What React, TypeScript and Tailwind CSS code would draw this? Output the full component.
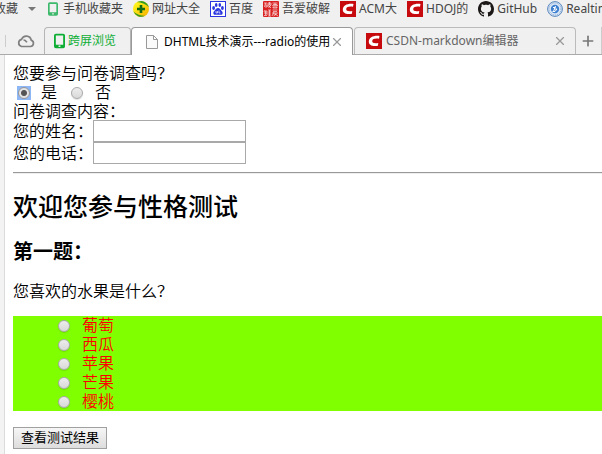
import React, { useState } from "react";
import { Plus, X } from "lucide-react";

const fruits = ["葡萄", "西瓜", "苹果", "芒果", "樱桃"];

const radioClass =
  "size-3 shrink-0 appearance-none rounded-full border border-[#a9a9a9] bg-linear-to-b from-[#ededed] to-[#d9d9d9] shadow-[0_1px_1px_rgba(0,0,0,0.12)]";

const PhoneIcon = ({ className }: { className?: string }) => (
  <svg viewBox="0 0 12 16" className={className} fill="currentColor">
    <path
      fillRule="evenodd"
      d="M2 0h8a2 2 0 0 1 2 2v12a2 2 0 0 1-2 2H2a2 2 0 0 1-2-2V2a2 2 0 0 1 2-2ZM2 2v10h8V2H2Zm3 11v1.500h2V13H5Z"
    />
  </svg>
);

const SiteIcon = () => (
  <svg viewBox="0 0 16 16" className="size-4">
    <defs>
      <linearGradient id="site" x1="0" y1="0" x2="1" y2="1">
        <stop offset="0.2" stopColor="#fff21a" />
        <stop offset="0.9" stopColor="#f5b400" />
      </linearGradient>
    </defs>
    <circle cx="8" cy="8" r="8" fill="url(#site)" />
    <path d="M4 1.2A8 8 0 0 1 15.8 6.2C13 2.6 8 1.4 4 1.2Z" fill="#2f9a24" />
    <path d="M.4 10C3 13.6 8 14.8 12 14.8A8 8 0 0 1 .4 10Z" fill="#2f9a24" />
    <path d="M6.7 4h2.6v2.7H12v2.6H9.3V12H6.7V9.3H4V6.7h2.7Z" fill="#126b12" />
  </svg>
);

const PawIcon = () => (
  <svg viewBox="0 0 16 16" className="size-4">
    <rect x=".5" y=".5" width="15" height="15" fill="#fff" stroke="#2b36e0" />
    <g fill="#2b36e0">
      <ellipse cx="3.6" cy="7" rx="1.4" ry="1.9" />
      <ellipse cx="6.2" cy="4" rx="1.3" ry="1.9" />
      <ellipse cx="9.8" cy="4" rx="1.3" ry="1.9" />
      <ellipse cx="12.4" cy="7" rx="1.4" ry="1.9" />
      <path d="M8 7c1.6 0 2.2 1.4 3.2 2.4 1.2 1.1 1.7 1.8 1.4 3-.3 1.3-1.5 1.6-2.6 1.4-1.3-.2-2.7-.2-4 0-1.1.2-2.3-.1-2.6-1.4-.3-1.2.2-1.9 1.4-3C5.800 8.400 6.400 7 8 7Z" />
    </g>
    <path d="M6 10v2h1.500v-2M9 9.500V12h1.500" fill="none" stroke="#fff" strokeWidth=".7" />
  </svg>
);

const SealIcon = () => (
  <svg viewBox="0 0 16 16" className="size-4">
    <rect width="16" height="16" rx="1" fill="#d92121" />
    <g stroke="#fff" strokeOpacity=".75" strokeWidth=".8" fill="none">
      <path d="M1 2h3M2.500 2 1.500 6M2 4h2v2H2M5 2h3v2M5 2v4M6.500 1v3M5 4h3L5.500 7M6 5l2 2" />
      <path d="M9.500 2h5M12 2v2.500M10 3.500h4v1M9 4.700h6M10 6h4v1h-4z" />
      <path d="M2 9 1 11M2 10h2v4M1 12h3M2.500 10v4M1 14.500h3M5 9h3M6.500 9v6M5 11h3M5 13h3M5 15h3" />
      <path d="M9.500 9h5M10 10.500h4M9 12h6M11 11l-2 4M10.500 13h3l-3 2M12 13l3 2" />
    </g>
  </svg>
);

const CIcon = () => (
  <svg viewBox="0 0 16 16" className="size-4 shrink-0">
    <rect width="16" height="16" fill="#c60a0e" />
    <path
      d="M13.500 3 13 5.800C9.500 5.200 6.500 5.800 6.200 8c-.2 2 2.300 2.600 6.100 2l-.4 2.800C6.500 13.800 2.600 12 2.800 8.500 3 4.500 7.500 2.300 13.500 3Z"
      fill="#fff"
    />
  </svg>
);

const GithubIcon = () => (
  <svg viewBox="0 0 16 16" className="size-4" fill="#1b1817">
    <path d="M8 0C3.580 0 0 3.580 0 8c0 3.540 2.290 6.530 5.470 7.590.4.070.55-.17.55-.38 0-.19-.01-.82-.01-1.490-2.010.37-2.530-.49-2.690-.94-.09-.23-.48-.94-.82-1.130-.28-.15-.68-.52-.01-.53.63-.01 1.080.58 1.230.82.72 1.210 1.870.87 2.330.66.070-.52.28-.87.51-1.070-1.780-.2-3.640-.89-3.640-3.950 0-.87.31-1.590.82-2.150-.08-.2-.36-1.020.08-2.120 0 0 .67-.21 2.200.82.64-.18 1.320-.27 2-.27s1.360.09 2 .27c1.530-1.040 2.200-.82 2.200-.82.44 1.100.16 1.920.08 2.120.51.56.82 1.270.82 2.150 0 3.070-1.870 3.750-3.650 3.950.29.25.54.73.54 1.480 0 1.070-.01 1.930-.01 2.200 0 .21.15.46.55.38A8.010 8.010 0 0 0 16 8c0-4.420-3.580-8-8-8Z" />
  </svg>
);

const BadgeIcon = () => (
  <svg viewBox="0 0 16 16" className="size-4" fill="none">
    <circle cx="8" cy="8" r="7.400" fill="#dbe8f6" stroke="#5b87bd" strokeWidth="1" />
    <circle cx="8" cy="8" r="6" stroke="#7da3d0" strokeDasharray="1 1" />
    <circle cx="8" cy="8" r="4.200" fill="#3f7fd0" />
    <path d="M6 6.500h2.500M8.500 5l-2 5.500M7 8h3L8 10.500H5.500" stroke="#fff" strokeWidth="1" />
  </svg>
);

const CloudIcon = () => (
  <svg viewBox="0 0 18 14" className="h-3.5 w-[18px] shrink-0" fill="none" stroke="#808080" strokeWidth="1.700">
    <path d="M6.500 6c1.800 0 2.500 1 3.500 2.300M4.500 12.500h9a3.300 3.300 0 0 0 .7-6.400A5 5 0 0 0 4.600 5.300a3.700 3.700 0 0 0-.1 7.200Z" />
  </svg>
);

const PageIcon = () => (
  <svg viewBox="0 0 12 14" className="h-3.5 w-3 shrink-0" fill="#fafafa" stroke="#999">
    <path d="M.5.5h7l4 4v9H.5ZM7.500.5v4h4" />
  </svg>
);

const bookmarks = [
  { label: "网址大全", icon: <SiteIcon /> },
  { label: "百度", icon: <PawIcon /> },
  { label: "吾爱破解", icon: <SealIcon /> },
  { label: "ACM大", icon: <CIcon /> },
  { label: "HDOJ的", icon: <CIcon /> },
  { label: "GitHub", icon: <GithubIcon /> },
  { label: "Realtime", icon: <BadgeIcon /> },
];

const App = () => {
  const [join, setJoin] = useState("yes");

  return (
    <div className="overflow-hidden bg-white">
      <header className="bg-[#f0f0f0] font-['Noto_Sans','Noto_Sans_CJK_SC',sans-serif] text-[12px] leading-4 whitespace-nowrap text-[#444]">
        <nav className="flex h-[27px] items-start gap-2.5 overflow-hidden pt-px">
          <a href="#" className="-ml-1.5 flex shrink-0 items-center gap-2.5">
            收藏
            <span className="border-x-4 border-t-4 border-x-transparent border-t-[#777]" />
          </a>
          <a href="#" className="ml-0.5 flex shrink-0 items-center gap-[5px]">
            <PhoneIcon className="h-3.5 w-2.5 text-[#3cb96b]" />
            手机收藏夹
          </a>
          {bookmarks.map((item) => (
            <a href="#" key={item.label} className="flex shrink-0 items-center gap-[3px]">
              {item.icon}
              {item.label}
            </a>
          ))}
        </nav>
        <div className="flex h-7 border-b border-[#aaa]">
          <div className="flex w-11 shrink-0 items-center gap-[11px] pl-[5px]">
            <span className="h-3 w-px bg-[#ccc]" />
            <CloudIcon />
          </div>
          <button className="flex w-[87px] shrink-0 items-center gap-[3px] rounded-t-[4px] border border-b-0 border-[#b5b5b5] pl-[9px] text-[#0eae35]">
            <PhoneIcon className="h-4 w-[11px]" />
            跨屏浏览
          </button>
          <div className="-mb-px flex w-[222px] shrink-0 items-center gap-1.5 rounded-t-[4px] border border-b-0 border-[#999] bg-white pr-2 pl-3.5 text-black">
            <PageIcon />
            <span className="min-w-0 flex-1 overflow-hidden">DHTML技术演示---radio的使用</span>
            <button aria-label="关闭" className="-ml-1.5 text-[#999]">
              <X size={14} strokeWidth={2} />
            </button>
          </div>
          <div className="ml-px flex w-[222px] shrink-0 items-center gap-1 rounded-t-[4px] border border-b-0 border-[#bbb] pr-2 pl-[11px] text-[#666]">
            <CIcon />
            <span className="flex-1">CSDN-markdown编辑器</span>
            <button aria-label="关闭" className="text-[#999]">
              <X size={14} strokeWidth={2} />
            </button>
          </div>
          <button aria-label="新标签页" className="flex flex-1 items-center border-r border-[#ccc] pl-1 text-[#777]">
            <Plus size={16} strokeWidth={2.5} className="shrink-0" />
          </button>
        </div>
      </header>

      <main className="flex">
        <div className="w-[5px] shrink-0 border-r border-[#dcdcdc] bg-[#f3f3f3]" />
        <div className="min-w-0 flex-1 pt-[9px] pb-[5px] pl-2 font-['Liberation_Serif','Noto_Sans_CJK_SC',sans-serif] text-[16px] leading-[19px] font-[350] text-black">
          <form>
            <p>您要参与问卷调查吗？</p>
            <div className="flex items-center">
              <label className="flex items-center gap-2.5 pl-1">
                <span className="flex bg-[#8db8f5] p-px">
                  <input
                    type="radio"
                    name="join"
                    checked={join === "yes"}
                    onChange={() => setJoin("yes")}
                    className="size-3 shrink-0 appearance-none rounded-full border border-[#999] bg-radial from-[#555] from-35% to-[#e4e4e4] to-50%"
                  />
                </span>
                是
              </label>
              <label className="flex items-center gap-3 pl-3.5">
                <input
                  type="radio"
                  name="join"
                  checked={join === "no"}
                  onChange={() => setJoin("no")}
                  className={radioClass}
                />
                否
              </label>
            </div>
            <p>问卷调查内容：</p>
            <label className="-mt-px flex items-center">
              您的姓名：
              <input type="text" className="h-[22px] w-[153px] border border-[#a9a9a9] bg-white px-1" />
            </label>
            <label className="flex items-center">
              您的电话：
              <input type="text" className="h-[22px] w-[153px] border border-[#a9a9a9] bg-white px-1" />
            </label>
          </form>
          <hr className="mt-2 h-0.5 border-t border-b border-t-[#999] border-b-[#eee]" />
          <h2 className="mt-5 text-[25px] leading-7 font-medium">欢迎您参与性格测试</h2>
          <h3 className="mt-[18px] text-[20px] leading-6 font-semibold">第一题：</h3>
          <p className="mt-[18px]">您喜欢的水果是什么？</p>
          <form>
            <ul className="mt-[15px] bg-[#80ff00] pl-[45px] text-[#f00]">
              {fruits.map((fruit) => (
                <li key={fruit}>
                  <label className="flex items-center gap-3">
                    <input type="radio" name="fruit" value={fruit} className={radioClass} />
                    {fruit}
                  </label>
                </li>
              ))}
            </ul>
            <button
              type="button"
              className="mt-4 block h-[22px] border border-[#a0a0a0] bg-linear-to-b from-[#f6f6f6] to-[#dddddd] px-[7px] text-[13px] leading-5 font-normal"
            >
              查看测试结果
            </button>
          </form>
        </div>
      </main>
    </div>
  );
};

export default App;
